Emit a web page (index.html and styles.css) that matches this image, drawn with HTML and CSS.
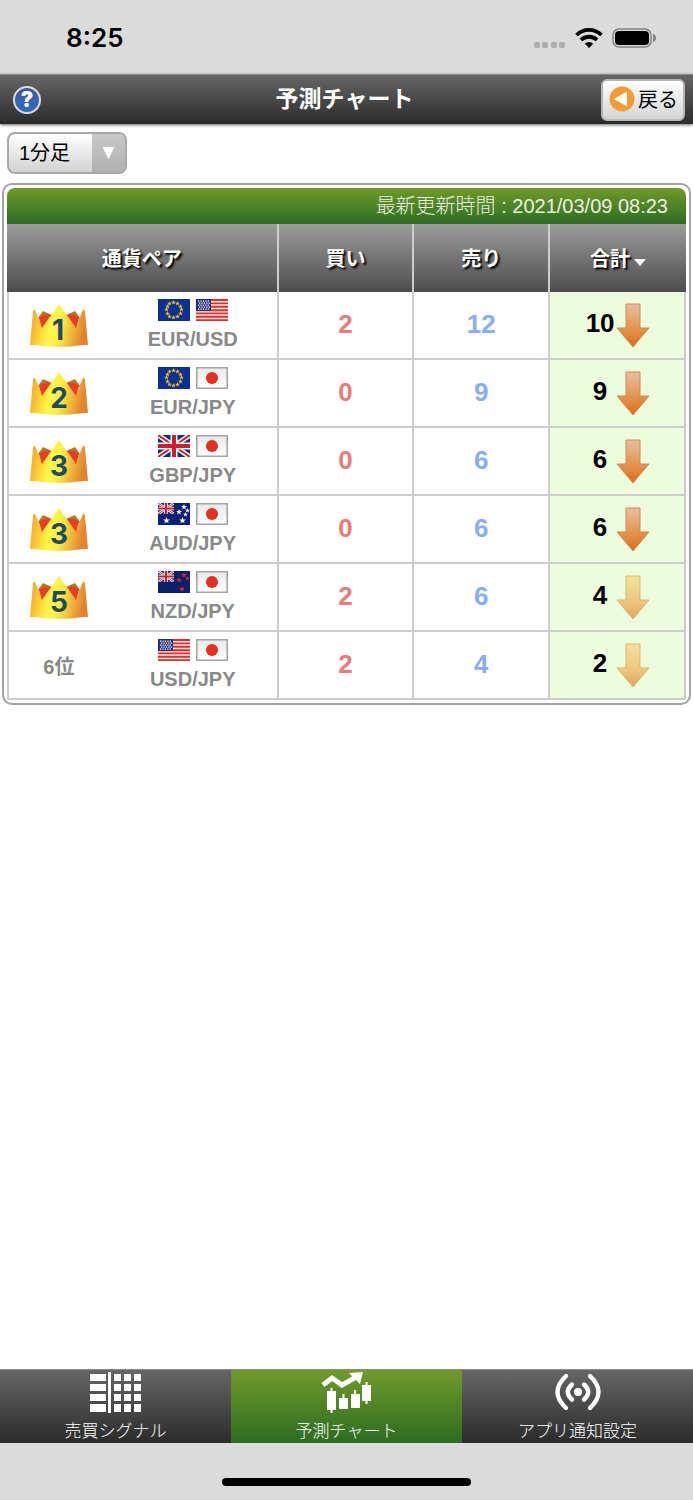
FILE: index.html
```html
<!DOCTYPE html>
<html lang="ja">
<head>
<meta charset="UTF-8">
<meta name="viewport" content="width=device-width, initial-scale=1.0">
<title>予測チャート</title>
<link rel="stylesheet" href="styles.css">
</head>
<body>
<!-- 共通パーツ -->
<svg class="defs" width="0" height="0" aria-hidden="true">
    <defs>
        <linearGradient id="gold" y2=".15">
            <stop offset="0" stop-color="#e99b33"/>
            <stop offset=".18" stop-color="#fbc02f"/>
            <stop offset=".42" stop-color="#fff84a"/>
            <stop offset=".6" stop-color="#fdea45"/>
            <stop offset="1" stop-color="#e08430"/>
        </linearGradient>
        <linearGradient id="strong" x2="0" y2="1">
            <stop offset="0" stop-color="#e9c0a0"/>
            <stop offset=".5" stop-color="#e39a58"/>
            <stop offset="1" stop-color="#dd6d1c"/>
        </linearGradient>
        <linearGradient id="weak" x2="0" y2="1">
            <stop offset="0" stop-color="#f4e29c"/>
            <stop offset=".6" stop-color="#ecc77e"/>
            <stop offset="1" stop-color="#e0a45c"/>
        </linearGradient>
        <linearGradient id="paper" x2="0" y2="1">
            <stop offset="0" stop-color="#e9e9e9"/>
            <stop offset="1" stop-color="#fff"/>
        </linearGradient>
    </defs>
    <symbol id="crown" viewBox="0 0 60 45">
        <path d="M9 15L14 8L23 12L15 20Z" fill="#b0762a"/>
        <path d="M51 15L46 8L37 12L45 20Z" fill="#b0762a"/>
        <path d="M1 42L4 9Q5 4 7 9L13 24L21 13Q26 8 30 1Q34 8 39 13L47 24L53 9Q55 4 56 9L59 42L54 42Q30 46 6 42Z" fill="url(#gold)"/>
        <path d="M10 15Q15 11 22 12L13 25Z" fill="#ea3c22"/>
        <path d="M50 15Q45 11 38 12L47 25Z" fill="#ea3c22"/>
    </symbol>
    <symbol id="arrow" viewBox="0 0 34 45">
        <path d="M10 1H24V25H33L17 44L1 25H10Z"/>
    </symbol>
    <symbol id="star" viewBox="-5 -5 10 10">
        <path d="M0 -5L1.3 -1.6L5 -1.5L2 .7L3.1 4L0 2.1L-3.1 4L-2 .7L-5 -1.5L-1.3 -1.6Z"/>
    </symbol>
    <symbol id="jack" viewBox="0 0 32 22">
        <path d="M0 0H32V22H0Z" fill="#0b3184"/>
        <path d="M0 0L32 22M32 0L0 22" stroke="#fff" stroke-width="5"/>
        <path d="M0 0L32 22M32 0L0 22" stroke="#d4222a" stroke-width="2"/>
        <path d="M16 0V22M0 11H32" stroke="#fff" stroke-width="7"/>
        <path d="M16 0V22M0 11H32" stroke="#cc1f27" stroke-width="4"/>
    </symbol>
    <symbol id="eu" viewBox="0 0 32 22">
        <path d="M0 0H32V22H0Z" fill="#0e2f92"/>
        <g fill="#e8c01c">
            <use href="#star" x="13" y="1" width="5" height="5"/>
            <use href="#star" x="17" y="2" width="5" height="5"/>
            <use href="#star" x="20" y="5" width="5" height="5"/>
            <use href="#star" x="21" y="8" width="5" height="5"/>
            <use href="#star" x="20" y="12" width="5" height="5"/>
            <use href="#star" x="17" y="15" width="5" height="5"/>
            <use href="#star" x="13" y="16" width="5" height="5"/>
            <use href="#star" x="9" y="15" width="5" height="5"/>
            <use href="#star" x="7" y="12" width="5" height="5"/>
            <use href="#star" x="6" y="8" width="5" height="5"/>
            <use href="#star" x="7" y="5" width="5" height="5"/>
            <use href="#star" x="9" y="2" width="5" height="5"/>
        </g>
    </symbol>
    <symbol id="us" viewBox="0 0 32 22">
        <path d="M0 0H32V22H0Z" fill="#fbeae8"/>
        <path d="M0 1H32M0 4.4H32M0 7.8H32M0 11.2H32M0 14.4H32M0 17.8H32M0 21.1H32" stroke="#d9302c" stroke-width="1.9"/>
        <path d="M0 0H15V12H0Z" fill="#20307c"/>
        <path d="M2 2.2H14M3 4.2H14M2 6.2H14M3 8.2H14M2 10.2H14" stroke="#fff" stroke-width="1.3" stroke-dasharray="1.3 1.1"/>
    </symbol>
    <symbol id="jp" viewBox="0 0 32 22">
        <path d="M.8 .8H31.2V21.2H.8Z" fill="url(#paper)" stroke="#a6a6a6" stroke-width="1.6"/>
        <circle cx="16" cy="11" r="6" fill="#e5301d"/>
    </symbol>
    <symbol id="gb" viewBox="0 0 32 22">
        <use href="#jack" width="32" height="22"/>
    </symbol>
    <symbol id="au" viewBox="0 0 32 22">
        <path d="M0 0H32V22H0Z" fill="#0a1f78"/>
        <use href="#jack" width="16" height="11"/>
        <g fill="#fff">
            <use href="#star" x="5" y="14" width="7" height="7"/>
            <use href="#star" x="23" y="1" width="6" height="6"/>
            <use href="#star" x="18" y="6" width="6" height="6"/>
            <use href="#star" x="27" y="5" width="5" height="5"/>
            <use href="#star" x="25" y="9" width="5" height="5"/>
            <use href="#star" x="21" y="14" width="7" height="7"/>
        </g>
    </symbol>
    <symbol id="nz" viewBox="0 0 32 22">
        <path d="M0 0H32V22H0Z" fill="#0a1f6c"/>
        <use href="#jack" width="16" height="11"/>
        <g fill="#e0242c">
            <use href="#star" x="23" y="1" width="6" height="6"/>
            <use href="#star" x="18" y="6" width="6" height="6"/>
            <use href="#star" x="27" y="5" width="5" height="5"/>
            <use href="#star" x="21" y="15" width="6" height="6"/>
        </g>
    </symbol>
</svg>

<div class="status">
    <span class="clock">8:25</span>
    <div class="status-icons">
        <svg width="32" height="20" viewBox="0 0 32 20" fill="#adadad">
            <rect x="0" y="14" width="6" height="6" rx="2"/>
            <rect x="8" y="14" width="6" height="6" rx="2"/>
            <rect x="17" y="14" width="6" height="6" rx="2"/>
            <rect x="25" y="14" width="6" height="6" rx="2"/>
        </svg>
        <svg width="28" height="20" viewBox="0 0 28 20" fill="none" stroke="#000" stroke-width="3.8">
            <path d="M1.5 7A18 18 0 0 1 26.5 7"/>
            <path d="M6 12A11.5 11.5 0 0 1 22 12"/>
            <path d="M14 20L9.800 15.700A6 6 0 0 1 18.200 15.700Z" fill="#000" stroke="none"/>
        </svg>
        <svg width="45" height="20" viewBox="0 0 45 20">
            <rect x="1" y="1" width="38" height="18" rx="6" fill="none" stroke="#828282" stroke-width="1.5"/>
            <rect x="3" y="3" width="34" height="14" rx="4"/>
            <path d="M41 6Q44 7 44 10T41 14Z" fill="#828282"/>
        </svg>
    </div>
</div>

<header class="header">
    <a href="#help" class="help" aria-label="ヘルプ">?</a>
    <h1>予測チャート</h1>
    <a href="#back" class="back">
        <svg width="26" height="26" viewBox="0 0 26 26">
            <circle cx="13" cy="13" r="12.5" fill="#f39c35"/>
            <path d="M5 13L18 5.5V20.5Z" fill="#fff"/>
        </svg>
        戻る
    </a>
</header>

<main class="main">
    <div class="period">
        <select aria-label="足種">
            <option>1分足</option>
            <option>5分足</option>
            <option>60分足</option>
        </select>
        <span class="caret"></span>
    </div>

    <div class="panel">
        <table class="rank">
            <caption>最新更新時間 : 2021/03/09 08:23</caption>
            <colgroup>
                <col class="c-rank">
                <col class="c-pair">
                <col class="c-num">
                <col class="c-num">
                <col class="c-num">
            </colgroup>
            <thead>
                <tr>
                    <th colspan="2">通貨ペア</th>
                    <th>買い</th>
                    <th>売り</th>
                    <th><button type="button" class="sort">合計</button></th>
                </tr>
            </thead>
            <tbody>
                <tr>
                    <td class="no"><svg class="crown" width="60" height="45"><use href="#crown"/><text x="29" y="37">1</text></svg></td>
                    <td class="pair"><div class="flags"><svg><use href="#eu"/></svg><svg><use href="#us"/></svg></div>EUR/USD</td>
                    <td class="buy">2</td>
                    <td class="sell">12</td>
                    <td class="total"><div><span>10</span><svg class="strong"><use href="#arrow"/></svg></div></td>
                </tr>
                <tr>
                    <td class="no"><svg class="crown" width="60" height="45"><use href="#crown"/><text x="30" y="37">2</text></svg></td>
                    <td class="pair"><div class="flags"><svg><use href="#eu"/></svg><svg><use href="#jp"/></svg></div>EUR/JPY</td>
                    <td class="buy">0</td>
                    <td class="sell">9</td>
                    <td class="total"><div><span>9</span><svg class="strong"><use href="#arrow"/></svg></div></td>
                </tr>
                <tr>
                    <td class="no"><svg class="crown" width="60" height="45"><use href="#crown"/><text x="30" y="37">3</text></svg></td>
                    <td class="pair"><div class="flags"><svg><use href="#gb"/></svg><svg><use href="#jp"/></svg></div>GBP/JPY</td>
                    <td class="buy">0</td>
                    <td class="sell">6</td>
                    <td class="total"><div><span>6</span><svg class="strong"><use href="#arrow"/></svg></div></td>
                </tr>
                <tr>
                    <td class="no"><svg class="crown" width="60" height="45"><use href="#crown"/><text x="30" y="37">3</text></svg></td>
                    <td class="pair"><div class="flags"><svg><use href="#au"/></svg><svg><use href="#jp"/></svg></div>AUD/JPY</td>
                    <td class="buy">0</td>
                    <td class="sell">6</td>
                    <td class="total"><div><span>6</span><svg class="strong"><use href="#arrow"/></svg></div></td>
                </tr>
                <tr>
                    <td class="no"><svg class="crown" width="60" height="45"><use href="#crown"/><text x="30" y="37">5</text></svg></td>
                    <td class="pair"><div class="flags"><svg><use href="#nz"/></svg><svg><use href="#jp"/></svg></div>NZD/JPY</td>
                    <td class="buy">2</td>
                    <td class="sell">6</td>
                    <td class="total"><div><span>4</span><svg class="weak"><use href="#arrow"/></svg></div></td>
                </tr>
                <tr>
                    <td class="no">6位</td>
                    <td class="pair"><div class="flags"><svg><use href="#us"/></svg><svg><use href="#jp"/></svg></div>USD/JPY</td>
                    <td class="buy">2</td>
                    <td class="sell">4</td>
                    <td class="total"><div><span>2</span><svg class="weak"><use href="#arrow"/></svg></div></td>
                </tr>
            </tbody>
        </table>
    </div>
</main>

<nav class="tabs">
    <a href="#signal">
        <svg width="51" height="42" viewBox="0 0 51 42" fill="#fff">
            <path d="M0 2H16V9H0ZM0 12H16V19H0ZM0 22H16V29H0ZM0 32H16V40H0Z"/>
            <path d="M18 0H21V41H18Z"/>
            <path d="M24 2H31V9H24ZM24 12H31V19H24ZM24 22H31V29H24ZM24 32H31V40H24Z"/>
            <path d="M34 2H41V9H34ZM34 12H41V19H34ZM34 22H41V29H34ZM34 32H41V40H34Z"/>
            <path d="M44 2H51V9H44ZM44 12H51V19H44ZM44 22H51V29H44ZM44 32H51V40H44Z"/>
        </svg>
        売買シグナル
    </a>
    <a href="#chart" class="active">
        <svg width="54" height="42" viewBox="0 2 54 42" fill="#fff">
            <path d="M3 15L12 8L22 15L38 6" fill="none" stroke="#fff" stroke-width="5"/>
            <path d="M29 3L43 2L40 14L35 9Z"/>
            <path d="M7 21H10.500V18H12.500V21H16V40H12.500V43H10.500V40H7Z"/>
            <path d="M19 28H22.500V24H24.500V28H28V39H19Z"/>
            <path d="M31 24H34V20H36V24H40V38H31Z"/>
            <path d="M42 15H45.500V12H47.500V15H51V31H47.500V34H45.500V31H42Z"/>
        </svg>
        予測チャート
    </a>
    <a href="#notice">
        <svg width="46" height="42" viewBox="0 -2 46 42" fill="none" stroke="#fff" stroke-width="4.400" stroke-linecap="round">
            <circle cx="23" cy="18" r="4" fill="#fff" stroke="none"/>
            <path d="M17 10.500Q8.500 18 17 25.500M29 10.500Q37.500 18 29 25.500"/>
            <path d="M11 2Q-6 18 11 34M35 2Q52 18 35 34"/>
        </svg>
        アプリ通知設定
    </a>
</nav>
<div class="home"><span></span></div>
</body>
</html>
```
FILE: styles.css
```css
* {
    box-sizing: border-box;
}
body {
    margin: 0;
    min-height: 100vh;
    display: flex;
    flex-direction: column;
    font-family: "Liberation Sans", "Noto Sans CJK JP", sans-serif;
    font-size: 20px;
    color: #000;
    background: #fff;
}
a {
    color: inherit;
    text-decoration: none;
}
.defs {
    position: absolute;
}

/* ステータスバー */
.status {
    display: flex;
    justify-content: space-between;
    align-items: center;
    height: 74px;
    padding: 2px 36px 0 66px;
    background: #dbdbdb;
}
.clock {
    font: 600 26px/30px Inter, sans-serif;
}
.status-icons {
    display: flex;
    gap: 9px;
}

/* ヘッダー */
.header {
    display: grid;
    grid-template-columns: 1fr auto 1fr;
    align-items: center;
    height: 50px;
    padding: 0 8px;
    border-top: 1px solid #8a8a8a;
    background: linear-gradient(#666, #2b2b2b);
    box-shadow: 0 1px 3px rgba(0, 0, 0, .6);
    color: #fff;
}
.header h1 {
    margin: 0;
    padding: 0 4px 2px 0;
    font-size: 23px;
    line-height: 34px;
    font-weight: 600;
}
.help {
    width: 28px;
    height: 28px;
    margin-left: 5px;
    border: 2px solid #ddd;
    border-radius: 50%;
    background: linear-gradient(#4355a5, #2a6fc0);
    font: 900 21px/24px Inter, sans-serif;
    text-align: center;
}
.back {
    justify-self: end;
    display: flex;
    align-items: center;
    gap: 3px;
    height: 42px;
    padding: 0 5px 2px 6px;
    border: 2px solid #b5b5b5;
    border-radius: 6px;
    background: linear-gradient(#fff, #d4d4d4);
    color: #000;
}

/* 足種の選択 */
.main {
    flex: 1;
    padding: 8px 2px;
}
.period {
    position: relative;
    width: 120px;
    margin: 0 5px 9px;
}
.period select {
    display: block;
    width: 100%;
    height: 42px;
    padding: 0 40px 0 10px;
    border: 2px solid #a8a8a8;
    border-radius: 8px;
    background: linear-gradient(#fff, #d2d2d2);
    font: inherit;
    color: #000;
    appearance: none;
}
.caret {
    position: absolute;
    top: 2px;
    right: 2px;
    bottom: 2px;
    width: 33px;
    border-radius: 0 6px 6px 0;
    background: linear-gradient(#c8c8c8, #b0b0b0);
    pointer-events: none;
}
.caret::after {
    content: "";
    display: block;
    width: 12px;
    height: 12px;
    margin: 13px auto;
    background: #fff;
    clip-path: polygon(0 0, 100% 0, 50% 100%);
}

/* ランキング表 */
.panel {
    padding: 3px;
    border: 2px solid #a3a3a3;
    border-radius: 10px;
}
.rank {
    width: 100%;
    table-layout: fixed;
    border-spacing: 0;
}
.rank caption {
    height: 36px;
    padding-right: 18px;
    border-radius: 8px 8px 0 0;
    background: linear-gradient(#719a2a, #2d6c22);
    color: #e8f0e0;
    font-weight: 300;
    line-height: 36px;
    text-align: right;
}
.c-rank {
    width: 15%;
}
.c-pair {
    width: 25%;
}
.c-num {
    width: 20%;
}
.rank tr {
    height: 68px;
}
.rank th,
.rank td {
    padding: 0;
    text-align: center;
}
.rank th {
    padding-bottom: 2px;
    border-right: 2px solid #ccc;
    background: linear-gradient(#9c9c9c, #4c4c4c);
    color: #fff;
    text-shadow: 2px 2px 2px #000;
}
.rank th:last-child {
    border-right: 0;
}
.rank td {
    border-right: 2px solid #ccc;
    border-bottom: 2px solid #ccc;
}
.rank .no {
    border-right: 0;
    border-left: 2px solid #ccc;
    font-weight: bold;
    color: #888;
}
.sort {
    padding: 0;
    border: 0;
    background: none;
    font: inherit;
    color: inherit;
    text-shadow: inherit;
}
.sort::after {
    content: "";
    display: inline-block;
    margin-left: 4px;
    border: 6px solid transparent;
    border-top: 7px solid #fff;
    border-bottom: 0;
}
.crown {
    display: block;
    margin: 0 auto;
}
.crown text {
    font: 700 28px Inter, sans-serif;
    text-anchor: middle;
    fill: #1f4a63;
}
.pair {
    font-weight: bold;
    line-height: 24px;
    color: #888;
}
.flags {
    display: flex;
    justify-content: center;
    gap: 6px;
    margin-bottom: 6px;
}
.flags svg {
    width: 32px;
    height: 22px;
}
.buy,
.sell,
.total {
    font-size: 26px;
    font-weight: bold;
}
.rank .buy,
.rank .sell {
    padding-bottom: 2px;
}
.buy {
    color: #e87c7c;
}
.sell {
    color: #87adfa;
}
.total {
    background: #edfcdc;
}
.total div {
    display: flex;
    justify-content: center;
}
.total span {
    width: 32px;
    line-height: 40px;
}
.total svg {
    width: 34px;
    height: 45px;
    stroke-width: 1;
}
.strong {
    fill: url(#strong);
    stroke: #cf8a58;
}
.weak {
    fill: url(#weak);
    stroke: #dfb56c;
}

/* 下部タブ */
.tabs {
    display: grid;
    grid-template-columns: repeat(3, 1fr);
    border-top: 1px solid #8a8a8a;
    background: linear-gradient(#666, #2b2b2b);
    color: #fff;
}
.tabs a {
    display: flex;
    flex-direction: column;
    align-items: center;
    gap: 7px;
    padding-top: 2px;
    font-size: 17px;
    font-weight: 300;
    line-height: 22px;
}
.tabs .active {
    background: linear-gradient(#719a2a, #2d6c22);
}
.home {
    height: 57px;
    padding-top: 35px;
    background: #dbdbdb;
}
.home span {
    display: block;
    width: 36%;
    height: 8px;
    margin: 0 auto;
    border-radius: 4px;
    background: #000;
}
```
